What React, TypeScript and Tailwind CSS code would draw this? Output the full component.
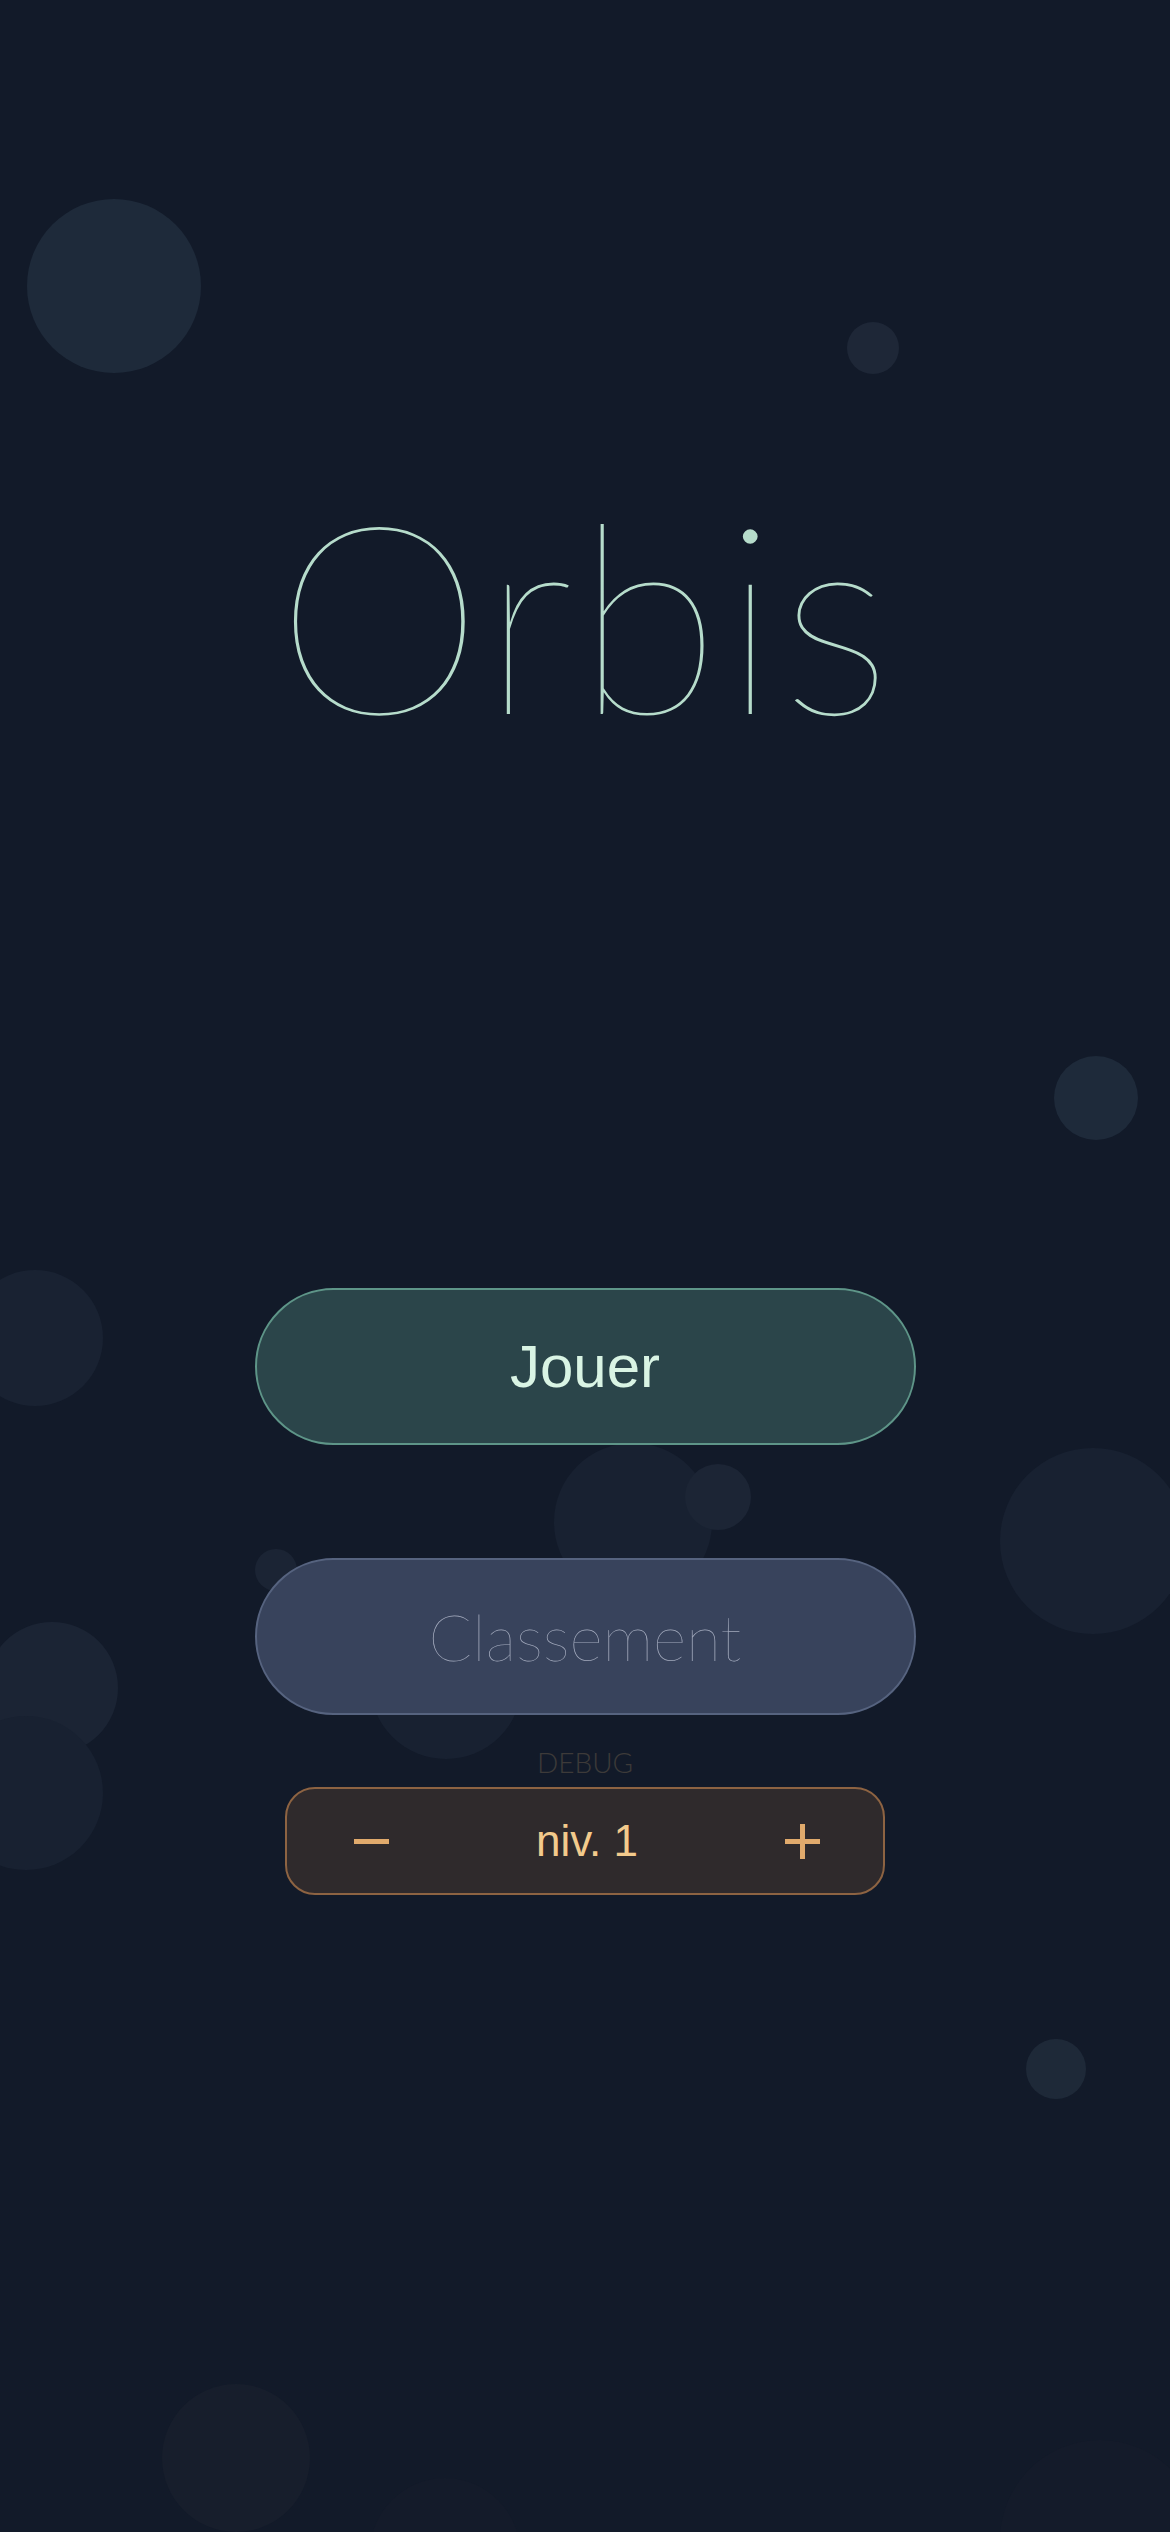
import { useState } from 'react';

// background bubbles: [cx, cy, r, colour class]
const bubbles: { x: number; y: number; r: number; c: string }[] = [
  { x: 114, y: 286, r: 87, c: 'bg-[#1e2a3a]' },
  { x: 873, y: 348, r: 26, c: 'bg-[#1e2737]' },
  { x: 1096, y: 1098, r: 42, c: 'bg-[#1e2a3a]' },
  { x: 35, y: 1338, r: 68, c: 'bg-[#192232]' },
  { x: 633, y: 1522, r: 79, c: 'bg-[#182131]' },
  { x: 718, y: 1497, r: 33, c: 'bg-[#1c2535]' },
  { x: 1093, y: 1541, r: 93, c: 'bg-[#182131]' },
  { x: 276, y: 1570, r: 21, c: 'bg-[#1b2434]' },
  { x: 52, y: 1688, r: 66, c: 'bg-[#1b2434]' },
  { x: 26, y: 1793, r: 77, c: 'bg-[#182131]' },
  { x: 446, y: 1683, r: 76, c: 'bg-[#182131]' },
  { x: 1056, y: 2069, r: 30, c: 'bg-[#1e2938]' },
  { x: 236, y: 2458, r: 74, c: 'bg-[#171e2c]' },
  { x: 445, y: 2553, r: 75, c: 'bg-[#141b2a]' },
  { x: 1100, y: 2540, r: 100, c: 'bg-[#141b2a]' },
];

export default function App() {
  const [level, setLevel] = useState(1);

  return (
    <main className="relative w-full min-h-[2532px] overflow-hidden bg-[#121a29] font-['Lato',sans-serif]">
      {/* Bubbles */}
      {bubbles.map((b, i) => (
        <div
          key={i}
          className={`absolute rounded-full ${b.c}`}
          style={{ left: b.x - b.r, top: b.y - b.r, width: b.r * 2, height: b.r * 2 }}
        />
      ))}

      <div className="relative flex flex-col items-center pt-[480px]">
        <h1 className="text-[264px] leading-none font-extralight text-[#b6dccb] tracking-[3px] font-['Lato',sans-serif]">
          Orbis
        </h1>

        <div className="mt-[544px] flex flex-col items-center">
          <button className="w-[661px] h-[157px] rounded-full bg-[#2b454a] border-2 border-[#5e9588] flex items-center justify-center">
            <span className="text-[60px] text-[#d9f4e4] font-['Liberation_Sans',sans-serif]">Jouer</span>
          </button>

          <button className="mt-[113px] w-[661px] h-[157px] rounded-full bg-[#38435c] border-2 border-[#56637f] flex items-center justify-center">
            <span className="text-[64px] font-extralight text-[#a4abbe] font-['Lato',sans-serif]">Classement</span>
          </button>

          <span className="mt-[26px] text-[28px] font-light text-[#3d3a39] font-['Lato',sans-serif]">DEBUG</span>

          <div className="mt-[4px] w-[600px] h-[108px] rounded-[30px] bg-[#2f2a2c] border-2 border-[#8d6342] flex items-center justify-between pl-[66px] pr-[62px]">
            <button onClick={() => setLevel(l => Math.max(1, l - 1))} className="w-[36px] h-[36px] flex items-center justify-center">
              <span className="block w-[35px] h-[5px] bg-[#e1aa6c]" />
            </button>
            <span className="text-[44px] text-[#f3ca8c] font-['Liberation_Sans',sans-serif]">niv. {level}</span>
            <button onClick={() => setLevel(l => l + 1)} className="relative w-[36px] h-[36px] flex items-center justify-center">
              <span className="absolute w-[35px] h-[5px] bg-[#e1aa6c]" />
              <span className="absolute w-[5px] h-[35px] bg-[#e1aa6c]" />
            </button>
          </div>
        </div>
      </div>
    </main>
  );
}
